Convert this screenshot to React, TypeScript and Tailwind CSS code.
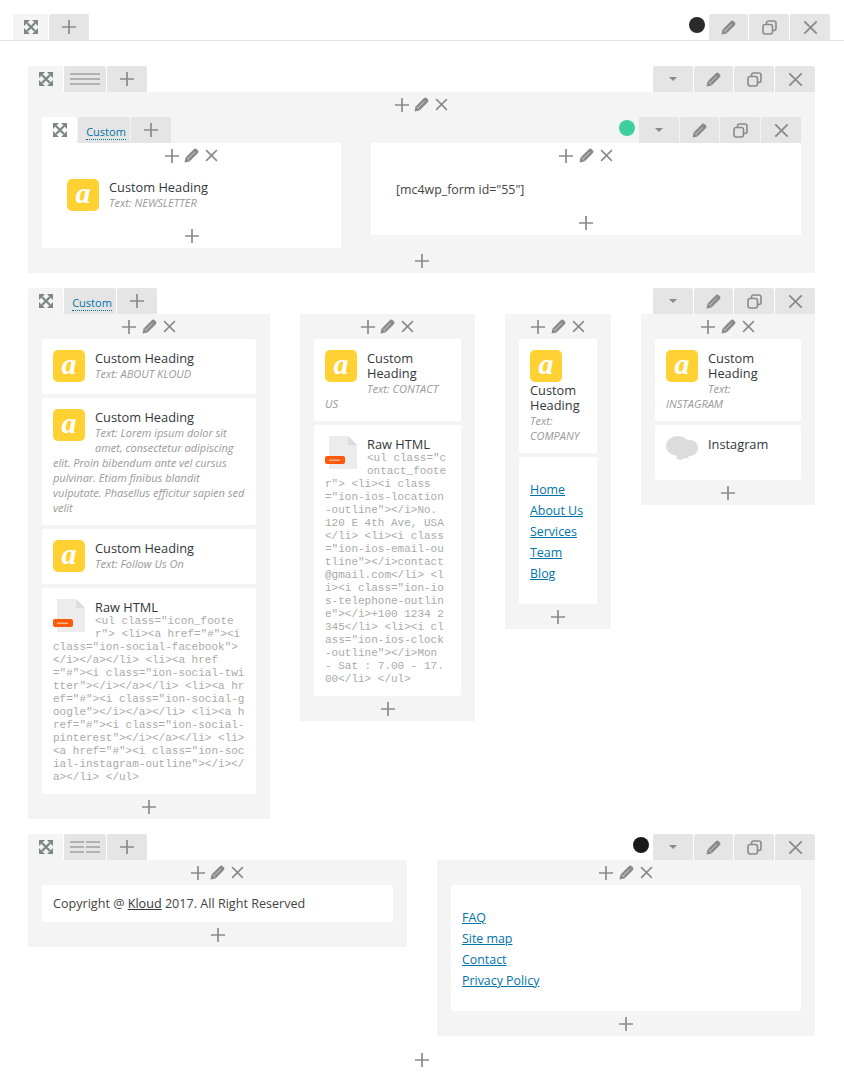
import React from "react";

const C = "#8a8a8a";

function Plus({ size = 16 }: { size?: number }) {
  return (
    <svg width={size} height={size} viewBox="0 0 16 16">
      <path d="M8 1v14M1 8h14" stroke={C} strokeWidth="1.7" fill="none" />
    </svg>
  );
}
function Cross({ size = 14 }: { size?: number }) {
  return (
    <svg width={size} height={size} viewBox="0 0 14 14">
      <path d="M1.2 1.2l11.6 11.6M12.8 1.2L1.2 12.8" stroke={C} strokeWidth="1.7" fill="none" />
    </svg>
  );
}
function Pencil({ size = 15 }: { size?: number }) {
  return (
    <svg width={size} height={size} viewBox="0 0 15 15">
      <path d="M0.5 14.5l1-5L9.8 1.2c.9-.9 2-.9 2.9 0l1.1 1.1c.9.9.9 2 0 2.9L5.5 13.500z" fill={C} />
      <path d="M4 10.9L10.6 4.3" stroke="#fff" strokeOpacity="0.6" strokeWidth="0.9" fill="none" />
      <path d="M2.2 9.4l3.4 3.4" stroke="#fff" strokeOpacity="0.5" strokeWidth="0.7" fill="none" />
    </svg>
  );
}
function Copy() {
  return (
    <svg width="15" height="15" viewBox="0 0 15 15">
      <rect x="4.5" y="1" width="9.5" height="9.5" rx="2.2" stroke={C} strokeWidth="1.6" fill="none" />
      <rect x="1" y="4.5" width="9.5" height="9.5" rx="2.2" stroke={C} strokeWidth="1.6" fill="#e5e5e5" />
    </svg>
  );
}
function Caret() {
  return (
    <svg width="8" height="4" viewBox="0 0 8 4">
      <path d="M0 0h8L4 4z" fill={C} />
    </svg>
  );
}
function Expand() {
  return (
    <svg width="14" height="14" viewBox="0 0 14 14">
      <path d="M3 3l8 8M11 3l-8 8" stroke="#7c8781" strokeWidth="2.2" fill="none" />
      <path d="M0 0h6L0 6zM14 0v6L8 0zM0 14V8l6 6zM14 14H8l6-6z" fill="#7c8781" />
    </svg>
  );
}
function Lines({ two }: { two?: boolean }) {
  return (
    <svg width="30" height="14" viewBox="0 0 30 14">
      <path
        d={two ? "M0 2h14M16 2h14M0 7h14M16 7h14M0 12h14M16 12h14" : "M0 2h30M0 7h30M0 12h30"}
        stroke="#a0a0a0"
        strokeWidth="1.5"
        fill="none"
      />
    </svg>
  );
}

function Tab({ w, children, active, white }: { w: string; children: React.ReactNode; active?: boolean; white?: boolean }) {
  return (
    <div
      className={`${w} h-[26px] flex items-center justify-center rounded-t-[2px] ${
        white ? "bg-white" : active ? "bg-[#f4f4f4]" : "bg-[#e5e5e5]"
      }`}
    >
      {children}
    </div>
  );
}

function RightTabs({ caret = true, dot }: { caret?: boolean; dot?: string }) {
  return (
    <div className="flex items-start gap-px">
      {dot && <div className="w-4 h-4 rounded-full mt-[3px] mr-[3px]" style={{ background: dot }} />}
      {caret && (
        <Tab w="w-10">
          <Caret />
        </Tab>
      )}
      <Tab w="w-[39px]">
        <Pencil />
      </Tab>
      <Tab w="w-10">
        <Copy />
      </Tab>
      <Tab w="w-10">
        <Cross size={15} />
      </Tab>
    </div>
  );
}

function Controls() {
  return (
    <div className="flex items-center justify-center h-[25px]">
      <div className="w-5 flex justify-center">
        <Plus size={16} />
      </div>
      <div className="w-5 flex justify-center">
        <Pencil size={15} />
      </div>
      <div className="w-5 flex justify-center">
        <Cross size={13} />
      </div>
    </div>
  );
}

function AddRow({ h = "h-[25px]" }: { h?: string }) {
  return (
    <div className={`flex items-center justify-center ${h}`}>
      <Plus size={16} />
    </div>
  );
}

function Heading({ children }: { children: React.ReactNode }) {
  return <div className="text-[12.8px] leading-[15px] text-[#32373c] pt-[1px]">{children}</div>;
}

function ACard({ text, h }: { text: string; h?: string }) {
  return (
    <div className={`bg-white rounded-[2px] p-[11px] ${h ?? ""}`}>
      <div className="float-left w-8 h-8 rounded-[5px] bg-[#ffd133] mr-[10px] mb-[1px] flex items-center justify-center">
        <span className="text-white italic font-bold text-[30px] leading-none font-['Liberation_Serif',serif] -mt-[4px]">a</span>
      </div>
      <Heading>Custom Heading</Heading>
      <div className="text-[11px] leading-[15px] italic text-[#999]">{text}</div>
    </div>
  );
}

function RawCard({ lines, h }: { lines: string[]; h: string }) {
  return (
    <div className={`bg-white rounded-[2px] p-[11px] ${h}`}>
      <div className="float-left w-8 h-8 mr-[10px] mb-[1px]">
        <svg width="32" height="33" viewBox="0 0 32 33">
          <path d="M4 1a1 1 0 0 1 1-1h18l9 9v23a1 1 0 0 1-1 1H5a1 1 0 0 1-1-1z" fill="#ececec" />
          <path d="M23 0l9 9h-9z" fill="#dcdcdc" />
          <rect x="0" y="20" width="20" height="8" rx="2" fill="#ff5a0a" />
          <rect x="4" y="23.500" width="11" height="1.500" fill="#ffb285" />
        </svg>
      </div>
      <Heading>Raw HTML</Heading>
      <div className="font-['Liberation_Mono',monospace] text-[11px] leading-[13px] text-[#aaa]">
        {lines.map((l, i) => (
          <div key={i} className="whitespace-pre">
            {l}
          </div>
        ))}
      </div>
    </div>
  );
}

function LinkList({ items }: { items: string[] }) {
  return (
    <div className="flex flex-col items-start">
      {items.map((i) => (
        <a key={i} className="text-[12.4px] leading-[21px] text-[#0073aa] underline">
          {i}
        </a>
      ))}
    </div>
  );
}

function CustomLabel() {
  return (
    <span className="text-[11px] leading-[13px] pl-1 pt-[2px] text-[#0073aa]">
      <span className="border-b border-dotted border-[#0073aa]">Custom</span>
    </span>
  );
}

const raw1 = [
  '<ul class="icon_foote',
  'r"> <li><a href="#"><i',
  'class="ion-social-facebook">',
  "</i></a></li> <li><a href",
  '="#"><i class="ion-social-twi',
  'tter"></i></a></li> <li><a hr',
  'ef="#"><i class="ion-social-g',
  'oogle"></i></a></li> <li><a h',
  'ref="#"><i class="ion-social-',
  'pinterest"></i></a></li> <li>',
  '<a href="#"><i class="ion-soc',
  'ial-instagram-outline"></i></',
  "a></li> </ul>",
];
const raw2 = [
  '<ul class="c',
  "ontact_foote",
  'r"> <li><i class',
  '="ion-ios-location',
  '-outline"></i>No.',
  "120 E 4th Ave, USA",
  "</li> <li><i class",
  '="ion-ios-email-ou',
  'tline"></i>contact',
  "@gmail.com</li> <l",
  'i><i class="ion-io',
  "s-telephone-outlin",
  'e"></i>+100 1234 2',
  "345</li> <li><i cl",
  'ass="ion-ios-clock',
  '-outline"></i>Mon',
  "- Sat : 7.00 - 17.",
  "00</li> </ul>",
];

export default function App() {
  return (
    <div className="w-[844px] h-[1090px] bg-white font-['Open_Sans',sans-serif] overflow-hidden pt-[14px]">
      {/* Top bar */}
      <div className="h-[27px] pl-[13px] pr-[14px] flex justify-between border-b border-[#e5e5e5]">
        <div className="flex gap-px">
          <Tab w="w-[35px]" active>
            <Expand />
          </Tab>
          <Tab w="w-10">
            <Plus />
          </Tab>
        </div>
        <RightTabs caret={false} dot="#2a2a2a" />
      </div>

      <div className="ml-7 w-[787px] pt-[25px] flex flex-col">
        {/* Row 1 */}
        <div className="flex justify-between">
          <div className="flex gap-px">
            <Tab w="w-[35px]" active>
              <Expand />
            </Tab>
            <Tab w="w-[42px]">
              <Lines />
            </Tab>
            <Tab w="w-10">
              <Plus />
            </Tab>
          </div>
          <RightTabs />
        </div>
        <div className="bg-[#f4f4f4] h-[181px] px-[14px] flex flex-col">
          <Controls />
          <div className="flex justify-between">
            <div className="flex gap-px">
              <Tab w="w-[35px]" white>
                <Expand />
              </Tab>
              <Tab w="w-[52px]">
                <CustomLabel />
              </Tab>
              <Tab w="w-10">
                <Plus />
              </Tab>
            </div>
            <RightTabs dot="#3ecf9e" />
          </div>
          <div className="flex gap-[30px] items-start">
            <div className="w-[299px] h-[105px] bg-white flex flex-col">
              <Controls />
              <div className="h-[55px] pl-[14px]">
                <ACard text="Text: NEWSLETTER" />
              </div>
              <AddRow />
            </div>
            <div className="w-[430px] h-[92px] bg-white flex flex-col">
              <Controls />
              <div className="h-[42px] pl-[25px] pt-[13px] text-[12.4px] leading-[17px] text-[#444]">[mc4wp_form id="55"]</div>
              <AddRow />
            </div>
          </div>
          <AddRow h="h-[25px] mt-auto" />
        </div>

        {/* Row 2 */}
        <div className="flex justify-between mt-[15px]">
          <div className="flex gap-px">
            <Tab w="w-[35px]" active>
              <Expand />
            </Tab>
            <Tab w="w-[52px]">
              <CustomLabel />
            </Tab>
            <Tab w="w-10">
              <Plus />
            </Tab>
          </div>
          <RightTabs />
        </div>
        <div className="flex justify-between items-start">
          <div className="w-[242px] h-[505px] bg-[#f4f4f4] px-[14px]">
            <Controls />
            <div className="flex flex-col gap-1">
              <ACard text="Text: ABOUT KLOUD" h="h-[55px]" />
              <ACard
                text="Text: Lorem ipsum dolor sit amet, consectetur adipiscing elit. Proin bibendum ante vel cursus pulvinar. Etiam finibus blandit vulputate. Phasellus efficitur sapien sed velit"
                h="h-[127px]"
              />
              <ACard text="Text: Follow Us On" h="h-[55px]" />
              <RawCard lines={raw1} h="h-[206px]" />
            </div>
            <AddRow />
          </div>
          <div className="w-[175px] h-[407px] bg-[#f4f4f4] px-[14px]">
            <Controls />
            <div className="flex flex-col gap-1">
              <ACard text="Text: CONTACT US" h="h-[82px]" />
              <RawCard lines={raw2} h="h-[271px]" />
            </div>
            <AddRow />
          </div>
          <div className="w-[106px] h-[315px] bg-[#f4f4f4] px-[14px]">
            <Controls />
            <div className="flex flex-col gap-1">
              <ACard text="Text: COMPANY" h="h-[114px]" />
              <div className="bg-white rounded-[2px] h-[147px] pl-[11px] pt-[22px]">
                <LinkList items={["Home", "About Us", "Services", "Team", "Blog"]} />
              </div>
            </div>
            <AddRow />
          </div>
          <div className="w-[174px] h-[191px] bg-[#f4f4f4] px-[14px]">
            <Controls />
            <div className="flex flex-col gap-1">
              <ACard text="Text: INSTAGRAM" h="h-[82px]" />
              <div className="bg-white rounded-[2px] h-[55px] p-[11px]">
                <svg width="32" height="24" viewBox="0 0 32 24" className="float-left mr-[10px]">
                  <g fill="#dcdcdc">
                    <ellipse cx="12" cy="10" rx="12" ry="10" />
                    <ellipse cx="24" cy="12" rx="8" ry="8" />
                    <path d="M10 17h14l-2 5-5 .5-1 1.500-5-1z" />
                  </g>
                </svg>
                <Heading>Instagram</Heading>
              </div>
            </div>
            <AddRow />
          </div>
        </div>

        {/* Row 3 */}
        <div className="flex justify-between mt-[15px]">
          <div className="flex gap-px">
            <Tab w="w-[35px]" active>
              <Expand />
            </Tab>
            <Tab w="w-[42px]">
              <Lines two />
            </Tab>
            <Tab w="w-10">
              <Plus />
            </Tab>
          </div>
          <RightTabs dot="#1a1a1a" />
        </div>
        <div className="flex justify-between items-start">
          <div className="w-[379px] h-[87px] bg-[#f4f4f4] px-[14px]">
            <Controls />
            <div className="bg-white rounded-[2px] h-[37px] pl-[11px] pt-[2px] flex items-center text-[12.6px] text-[#444]">
              <span>
                Copyright @ <span className="underline text-[#32373c]">Kloud</span> 2017. All Right Reserved
              </span>
            </div>
            <AddRow />
          </div>
          <div className="w-[378px] h-[176px] bg-[#f4f4f4] px-[14px]">
            <Controls />
            <div className="bg-white rounded-[2px] h-[126px] pl-[11px] pt-[22px]">
              <LinkList items={["FAQ", "Site map", "Contact", "Privacy Policy"]} />
            </div>
            <AddRow />
          </div>
        </div>

        <AddRow h="h-[48px]" />
      </div>
    </div>
  );
}
